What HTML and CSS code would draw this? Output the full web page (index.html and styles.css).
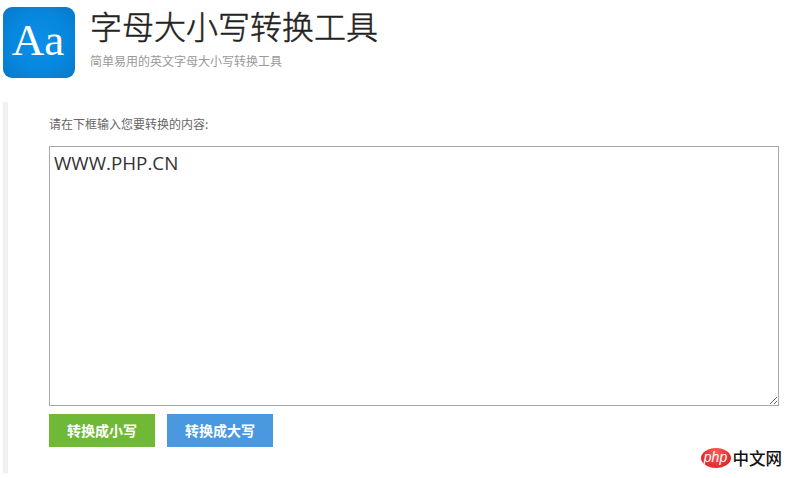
FILE: index.html
```html
<!DOCTYPE html>
<html lang="zh-CN">
<head>
  <meta charset="UTF-8" />
  <meta name="viewport" content="width=device-width, initial-scale=1" />
  <title>字母大小写转换工具</title>
  <link rel="stylesheet" href="styles.css">
</head>
<body>
  <div class="header">
    <div class="logo">Aa</div>
    <div class="header-text">
      <h1>字母大小写转换工具</h1>
      <p>简单易用的英文字母大小写转换工具</p>
    </div>
  </div>

  <div class="panel">
    <label for="content">请在下框输入您要转换的内容:</label>
    <textarea id="content" spellcheck="false">WWW.PHP.CN</textarea>
    <div class="buttons">
      <button class="btn-lower" onclick="toLower()">转换成小写</button>
      <button class="btn-upper" onclick="toUpper()">转换成大写</button>
    </div>
  </div>

  <div class="watermark">
    <span class="php">php</span>
    <span class="site">中文网</span>
  </div>

  <script>
    const content = document.getElementById('content');

    function toLower() {
      content.value = content.value.toLowerCase();
    }

    function toUpper() {
      content.value = content.value.toUpperCase();
    }
  </script>
</body>
</html>
```

FILE: styles.css
```css
* {
  box-sizing: border-box;
}
body {
  margin: 0;
  padding: 7px 13px 0 3px;
  height: 478px;
  overflow: hidden;
  position: relative;
  background: #fff;
  color: #333;
  font-family: "Noto Sans CJK SC", sans-serif;
  font-size: 12px;
}

.header {
  display: flex;
  height: 95px;
}
.logo {
  width: 72px;
  height: 71px;
  padding-right: 2px;
  border-radius: 9px;
  background: radial-gradient(circle, #0a90ea 0%, #0786dd 60%, #0878c6 100%);
  color: #fff;
  font-family: "Liberation Serif", serif;
  font-size: 45px;
  line-height: 66px;
  text-align: center;
}
.header-text {
  margin-left: 15px;
}
h1 {
  margin: 0;
  font-size: 32px;
  font-weight: 300;
  line-height: 37px;
  color: #222;
  -webkit-text-stroke: 0.5px #222;
}
.header-text p {
  margin: 8px 0 0;
  line-height: 18px;
  color: #999;
}

.panel {
  height: 371px;
  padding: 13px 0 0 41px;
  border-left: 5px solid #f0f0f0;
}
.panel label {
  display: block;
  height: 31px;
  line-height: 18px;
  color: #666;
}
textarea {
  display: block;
  width: 730px;
  height: 260px;
  margin: 0;
  padding: 3px 4px;
  border: 1px solid #a9a9a9;
  outline: none;
  color: #333;
  font-family: "Open Sans", "Noto Sans CJK SC", sans-serif;
  font-size: 18.8px;
  line-height: 26px;
}
.buttons {
  display: flex;
  gap: 12px;
  margin-top: 8px;
}
button {
  width: 106px;
  height: 33px;
  padding: 0 0 2px;
  border: none;
  color: white;
  font-family: "Noto Sans CJK SC", sans-serif;
  font-size: 14px;
  font-weight: bold;
  cursor: pointer;
}
.btn-lower {
  background: #6fb936;
}
.btn-upper {
  background: #4a98e0;
}

/* site mark over the bottom right corner */
.watermark {
  position: absolute;
  right: 10px;
  bottom: 10px;
  display: flex;
  align-items: center;
  gap: 2px;
}
.php {
  width: 30px;
  height: 20px;
  border-radius: 50%;
  background: radial-gradient(ellipse at 50% 25%, #f4605a, #e3252b 75%);
  color: #fff;
  font-family: "Liberation Sans", sans-serif;
  font-size: 14px;
  font-style: italic;
  line-height: 18px;
  text-align: center;
}
.site {
  color: #111;
  font-size: 16.5px;
  font-weight: 500;
  line-height: 20px;
}
```
